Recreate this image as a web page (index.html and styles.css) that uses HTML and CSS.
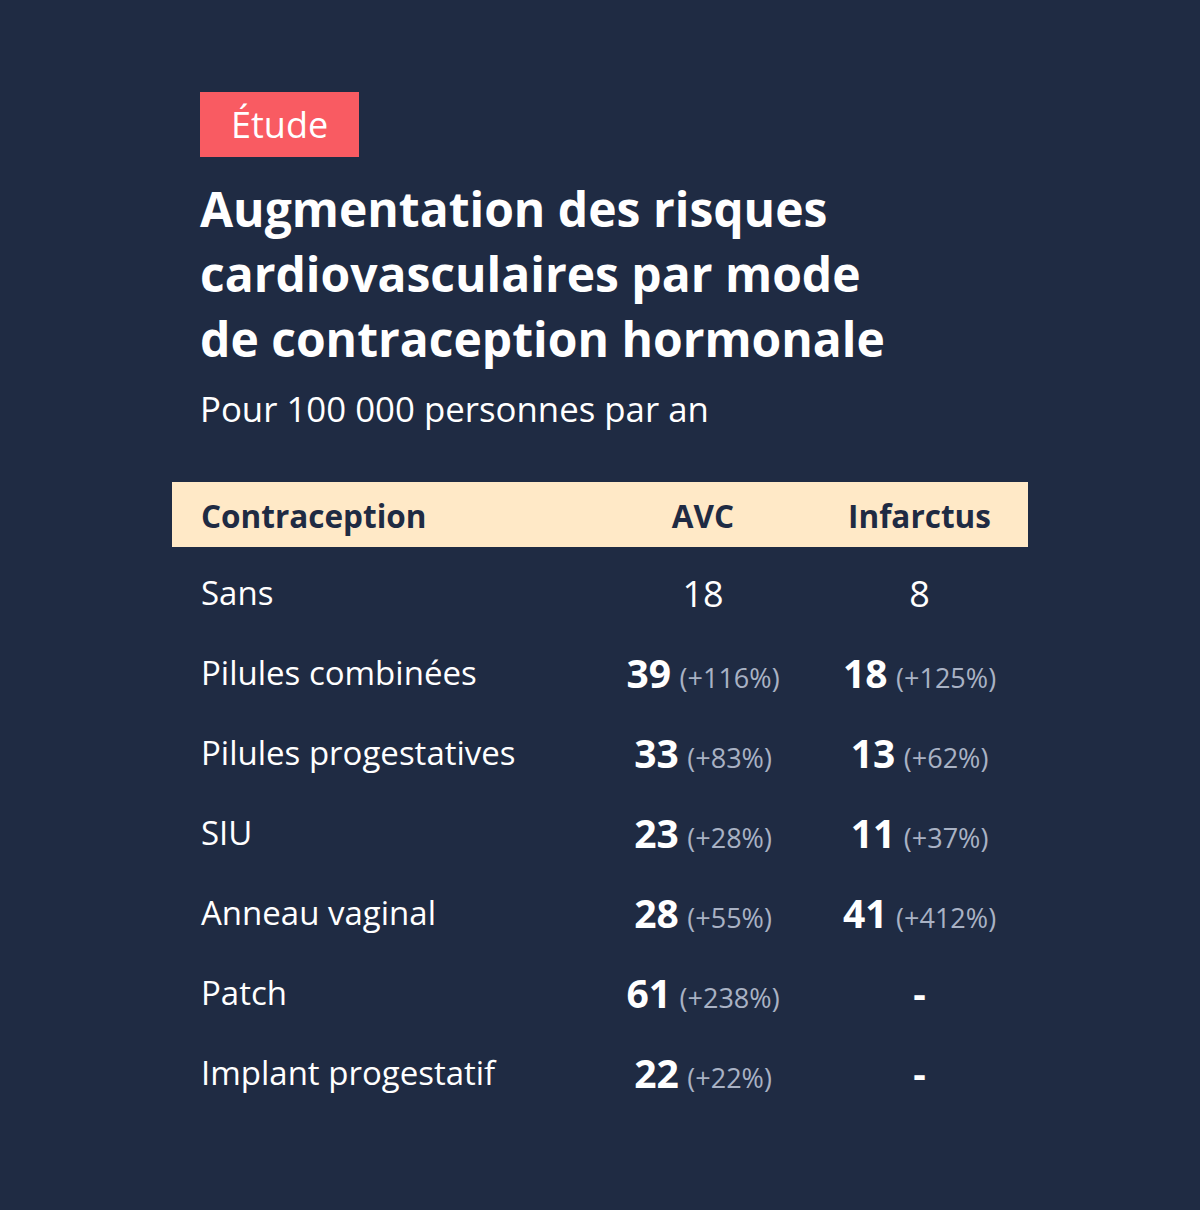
FILE: index.html
```html
<!DOCTYPE html>
<html lang="fr">
<head>
<meta charset="utf-8">
<link rel="stylesheet" href="styles.css">
</head>
<body>
<main class="card">
  <div class="head">
    <span class="badge">Étude</span>
    <h1 class="title">Augmentation des risques<br>cardiovasculaires par mode<br>de contraception hormonale</h1>
    <p class="subtitle">Pour 100 000 personnes par an</p>
  </div>
  <div class="table">
    <div class="row header">
      <div class="c1">Contraception</div>
      <div class="cn">AVC</div>
      <div class="cn">Infarctus</div>
    </div>
    <div class="row first">
      <div class="c1">Sans</div>
      <div class="cn"><span class="val plain">18</span></div>
      <div class="cn"><span class="val plain">8</span></div>
    </div>
    <div class="row">
      <div class="c1">Pilules combinées</div>
      <div class="cn"><span class="val"><b>39</b> <span class="pct">(+116%)</span></span></div>
      <div class="cn"><span class="val"><b>18</b> <span class="pct">(+125%)</span></span></div>
    </div>
    <div class="row">
      <div class="c1">Pilules progestatives</div>
      <div class="cn"><span class="val"><b>33</b> <span class="pct">(+83%)</span></span></div>
      <div class="cn"><span class="val"><b>13</b> <span class="pct">(+62%)</span></span></div>
    </div>
    <div class="row">
      <div class="c1">SIU</div>
      <div class="cn"><span class="val"><b>23</b> <span class="pct">(+28%)</span></span></div>
      <div class="cn"><span class="val"><b>11</b> <span class="pct">(+37%)</span></span></div>
    </div>
    <div class="row">
      <div class="c1">Anneau vaginal</div>
      <div class="cn"><span class="val"><b>28</b> <span class="pct">(+55%)</span></span></div>
      <div class="cn"><span class="val"><b>41</b> <span class="pct">(+412%)</span></span></div>
    </div>
    <div class="row">
      <div class="c1">Patch</div>
      <div class="cn"><span class="val"><b>61</b> <span class="pct">(+238%)</span></span></div>
      <div class="cn"><span class="val"><b>-</b></span></div>
    </div>
    <div class="row">
      <div class="c1">Implant progestatif</div>
      <div class="cn"><span class="val"><b>22</b> <span class="pct">(+22%)</span></span></div>
      <div class="cn"><span class="val"><b>-</b></span></div>
    </div>
  </div>
</main>
</body>
</html>
```

FILE: styles.css
```css
html, body {
  margin: 0;
  padding: 0;
  background: #1f2b43;
}
body {
  font-family: "Open Sans", "Noto Sans", sans-serif;
  color: #ffffff;
  width: 1200px;
  height: 1210px;
  overflow: hidden;
}
.card {
  padding: 92px 0 0 172px;
}
.head {
  padding-left: 28px;
}
.badge {
  display: block;
  width: fit-content;
  background: #f95b62;
  color: #fff;
  font-size: 36px;
  line-height: 65px;
  height: 65px;
  padding: 0 31px;
}
.title {
  margin: 19px 0 0;
  font-size: 48px;
  line-height: 65px;
  font-weight: 700;
}
.subtitle {
  margin: 14px 0 0;
  font-size: 34.8px;
  line-height: 48px;
  font-weight: 400;
}
.table {
  margin-top: 49px;
  width: 856px;
}
.row {
  display: grid;
  grid-template-columns: 423px 216px 217px;
  height: 80px;
  line-height: 80px;
  align-items: start;
  font-size: 33px;
}
.row.header {
  height: 63px;
  line-height: 63px;
  padding-top: 2px;
  background: #ffe9c7;
  color: #1f2b43;
  font-weight: 700;
  font-size: 31.5px;
}
.row.first {
  margin-top: 6px;
}
.c1 {
  padding-left: 29px;
  white-space: nowrap;
}
.cn {
  text-align: center;
  white-space: nowrap;
}
.val {
  vertical-align: -3px;
  line-height: 1;
}
.plain {
  font-size: 36px;
  vertical-align: -2px;
}
.val b {
  font-size: 39px;
  font-weight: 700;
  line-height: 1;
}
.pct {
  font-size: 27px;
  color: #a9b2c4;
  line-height: 1;
}
```
